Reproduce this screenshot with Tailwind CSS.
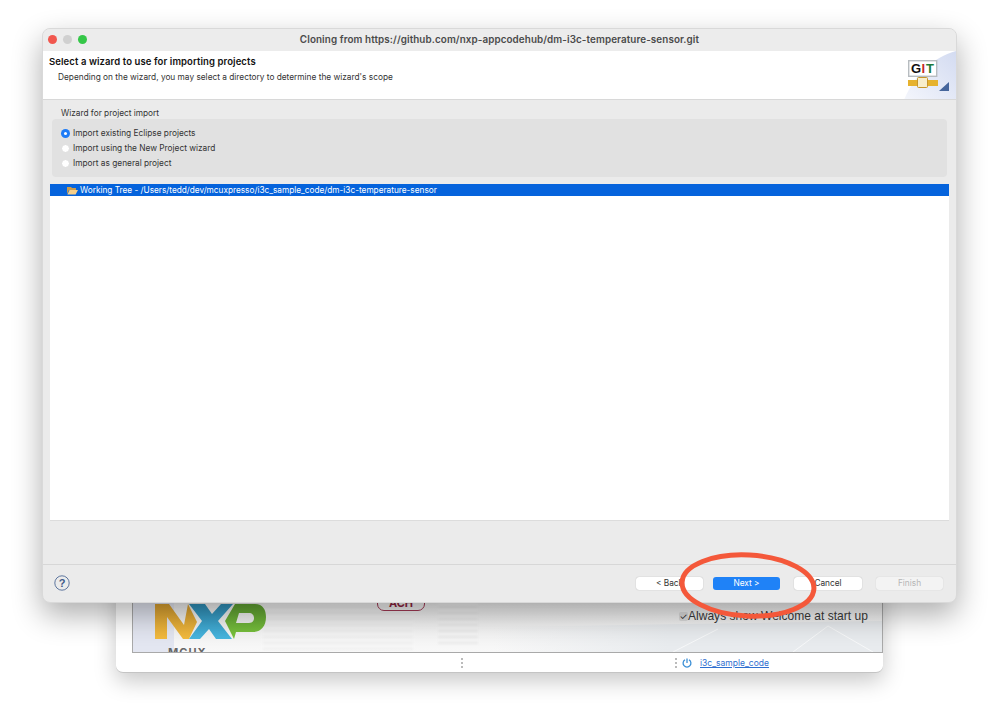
<!DOCTYPE html>
<html lang="en">
<head>
<meta charset="utf-8">
<script src="https://cdn.jsdelivr.net/npm/@tailwindcss/browser@4"></script>
<title>Cloning</title>
</head>
<body class="relative w-[999px] h-[704px] overflow-hidden bg-white font-['Inter','Liberation_Sans',sans-serif] text-[#2b2b2b]">

    <!-- welcome window behind the dialog -->
    <div class="absolute left-[116px] top-[560px] w-[767px] h-[113px] bg-white rounded-b-[7px] border-b border-[#c4c4c4] shadow-[0_8px_22px_rgba(0,0,0,0.22)] flex flex-col">
        <div class="relative ml-[16px] h-[93px] shrink-0 border-x border-b border-[#a9a9a9] bg-gradient-to-b from-[#cfcfcf] via-[#f0f0f0] to-[#f8f8f8] overflow-hidden">
            <div class="absolute left-0 bottom-0 w-[41px] h-[52px] bg-[#e3e6f1]"></div>
            <div class="absolute left-[130px] bottom-[2px] w-[150px] h-[50px] bg-[repeating-linear-gradient(180deg,#ebebeb_0px,#ebebeb_2px,#f7f7f7_2px,#f7f7f7_6px)] opacity-60 blur-[1px]"></div>
            <div class="absolute left-[305px] bottom-[8px] w-[40px] h-[44px] bg-[repeating-linear-gradient(180deg,#e2e2e2_0px,#e2e2e2_2px,#f7f7f7_2px,#f7f7f7_6px)] opacity-60 blur-[1px]"></div>
            <svg class="absolute left-[360px] top-[61px]" width="390" height="31" viewBox="0 0 390 31">
                <defs><linearGradient id="bd" x1="0" y1="0" x2="1" y2="0"><stop offset="0" stop-color="#e8ebee" stop-opacity="0"/><stop offset="0.45" stop-color="#e8ebee"/></linearGradient></defs>
                <path d="M0 6L390 0V31H0Z" fill="url(#bd)"/>
                <path d="M300 31L335 5L380 31M180 31L225 8" stroke="#f7f8f9" fill="none"/>
            </svg>
            <svg class="absolute left-[22px] top-[42px]" width="112" height="40" viewBox="0 0 112 40">
                <defs>
                    <linearGradient id="nY" x1="0" y1="0" x2="0" y2="1"><stop offset="0" stop-color="#d9a030"/><stop offset="1" stop-color="#f3bb3f"/></linearGradient>
                    <linearGradient id="nB" x1="0" y1="0" x2="0" y2="1"><stop offset="0" stop-color="#2f8fb8"/><stop offset="1" stop-color="#48b7e0"/></linearGradient>
                    <linearGradient id="nG" x1="0" y1="0" x2="0" y2="1"><stop offset="0" stop-color="#5fa032"/><stop offset="1" stop-color="#7cc63e"/></linearGradient>
                </defs>
                <path fill="url(#nY)" d="M0 2H14L29 23L33 2L42 20L34 37H28L12 15V37H0Z"/>
                <path fill="url(#nB)" d="M34 2H50L57 12L66 2H78L63 19L77 37H61L54 27L45 37H34L47 19Z"/>
                <path fill="url(#nG)" d="M80 2H100C108 2 111 8 111 15C111 24 106 30 98 30H81L79 37L70 19ZM84 11L81 21H94C98 21 99 18 99 16C99 13 97 11 94 11Z"/>
            </svg>
            <span class="absolute left-[35px] top-[87px] text-[11px] font-bold text-[#666] tracking-[1px] leading-none">MCUX</span>
            <div class="absolute left-[244px] top-[30px] w-[48px] h-[21px] rounded-[7px] border border-[#a33a55] text-[#8d2440] text-[11px] font-bold flex items-end justify-center leading-[13px]">ACH</div>
            <div class="absolute left-[546px] top-[47px] flex items-center">
                <span class="w-[9px] h-[9px] rounded-[2px] bg-[#dcdcdc] text-[9px] leading-[9px] text-[#222] flex items-center justify-center">✓</span>
                <span class="text-[12.05px] text-[#3a3a3a] font-['Liberation_Sans',sans-serif]">Always show Welcome at start up</span>
            </div>
        </div>
        <div class="flex-1 relative">
            <div class="absolute left-[345px] top-[5px] w-[1px] h-[10px] border-l-2 border-dotted border-[#bbb]"></div>
            <div class="absolute left-[559px] top-[5px] w-[1px] h-[10px] border-l-2 border-dotted border-[#bbb]"></div>
            <svg class="absolute left-[566px] top-[5px]" width="10" height="10" viewBox="0 0 10 10" fill="none" stroke="#3b8fd6" stroke-width="1.3"><path d="M3 1.8A3.9 3.9 0 1 0 7 1.8"/><path d="M5 .5V5"/></svg>
            <span class="absolute left-[584px] top-[5px] text-[8.5px] leading-[11px] text-[#2f6fd0] underline">i3c_sample_code</span>
        </div>
    </div>

    <!-- wizard dialog -->
    <div class="absolute left-[42px] top-[28px] w-[915px] h-[575px] rounded-[8px] bg-[#ebebeb] border border-[#d9d9d9] shadow-[0_12px_30px_rgba(0,0,0,0.32)] flex flex-col overflow-hidden">
        <div class="relative h-[22px] shrink-0 flex items-center justify-center bg-[#ececec] pb-[2px]">
            <div class="absolute left-[5px] top-[6px] flex gap-[6px]">
                <span class="w-[9px] h-[9px] rounded-full bg-[#f1574e]"></span>
                <span class="w-[9px] h-[9px] rounded-full bg-[#d0d0d0]"></span>
                <span class="w-[9px] h-[9px] rounded-full bg-[#35c748]"></span>
            </div>
            <span class="text-[9.85px] font-semibold text-[#4a4a4a] tracking-[0.1px]">Cloning from https://github.com/nxp-appcodehub/dm-i3c-temperature-sensor.git</span>
        </div>

        <div class="relative h-[49px] shrink-0 bg-white border-b border-[#d8d8d8] pl-[6px] pt-[5px] overflow-hidden">
            <div class="text-[9.5px] leading-[11px] font-semibold text-[#111] tracking-[0.1px]">Select a wizard to use for importing projects</div>
            <div class="text-[8.3px] leading-[11px] mt-[5px] pl-[9px] text-[#333]">Depending on the wizard, you may select a directory to determine the wizard's scope</div>
            <svg class="absolute right-0 top-0" width="60" height="49" viewBox="0 0 60 49">
                <defs><linearGradient id="hd" x1="0" y1="1" x2="1" y2="0"><stop offset="0" stop-color="#f4f6fc"/><stop offset="1" stop-color="#d3dbf1"/></linearGradient></defs>
                <path d="M60 0C38 6 18 24 8 49H60Z" fill="url(#hd)"/>
            </svg>
            <svg class="absolute left-[860px] top-[8px]" width="48" height="36" viewBox="0 0 48 36">
                <path d="M36 32H46V23Z" fill="#46669c"/>
                <rect x="5.7" y="1.7" width="28" height="15.6" fill="#fff" stroke="#b7bcc0" stroke-width="1.4"/>
                <rect x="5" y="21" width="30" height="6" fill="#e6b22e"/>
                <rect x="14.5" y="18.5" width="10" height="10" rx="1" fill="#f8eecb" stroke="#c7962a"/>
                <text x="8" y="14" font-family="Liberation Sans, sans-serif" font-weight="700" font-size="13" fill="#111">G</text>
                <text x="18.5" y="14" font-family="Liberation Sans, sans-serif" font-weight="700" font-size="13" fill="#c62828">I</text>
                <text x="23" y="14" font-family="Liberation Sans, sans-serif" font-weight="700" font-size="13" fill="#1c7a3a">T</text>
            </svg>
        </div>

        <div class="flex-1 flex flex-col px-[7px] min-h-0">
            <div class="pl-[11px] pt-[8px] text-[8.3px] leading-[11px] text-[#333]">Wizard for project import</div>
            <div class="ml-[2px] w-[895px] h-[58px] rounded-[4px] bg-[#e1e1e1] px-[9px] pt-[9px] flex flex-col gap-[4px] text-[8.3px] text-[#333]">
                <label class="h-[11px] flex items-center gap-[3px] leading-[11px]"><span class="w-[9px] h-[9px] rounded-full bg-[#1f7cf6] flex items-center justify-center"><span class="w-[3px] h-[3px] rounded-full bg-white"></span></span>Import existing Eclipse projects</label>
                <label class="h-[11px] flex items-center gap-[3px] leading-[11px]"><span class="w-[9px] h-[9px] rounded-full bg-white border border-[#dddddd]"></span>Import using the New Project wizard</label>
                <label class="h-[11px] flex items-center gap-[3px] leading-[11px]"><span class="w-[9px] h-[9px] rounded-full bg-white border border-[#dddddd]"></span>Import as general project</label>
            </div>
            <div class="mt-[7px] w-[899px] h-[337px] bg-white border-b border-[#dcdcdc]">
                <div class="h-[12px] bg-[#0563dc] flex items-center pl-[17px] gap-[2px] text-[8.25px] leading-[12px] text-white">
                    <svg width="11" height="9" viewBox="0 0 11 9"><path d="M0 1H4L5 2H9V4H2L0 8Z" fill="#c99a4a"/><path d="M2.5 4H11L8.6 8.5H0.4Z" fill="#f6cf8a"/></svg>
                    <span>Working Tree - /Users/tedd/dev/mcuxpresso/i3c_sample_code/dm-i3c-temperature-sensor</span>
                </div>
            </div>
        </div>

        <div class="h-[38px] shrink-0 border-t border-[#d7d7d7] relative flex items-center justify-end pr-[13px] pb-[1px] text-[8.3px]">
            <svg class="absolute left-[11px] top-[10px]" width="16" height="16" viewBox="0 0 16 16" fill="none"><circle cx="8" cy="8" r="7.2" stroke="#4f6a96" stroke-width="0.9"/><text x="8" y="12" text-anchor="middle" font-family="Liberation Sans, sans-serif" font-weight="700" font-size="11" fill="#3e5a88">?</text></svg>
            <button class="w-[67px] h-[13px] rounded-[3px] bg-white shadow-[0_0_1px_rgba(0,0,0,0.35)] leading-[13px] text-[#333]">&lt; Back</button>
            <button class="ml-[10px] w-[67px] h-[13px] rounded-[3px] bg-[#1f82f7] text-white leading-[13px]">Next &gt;</button>
            <button class="ml-[14px] w-[68px] h-[13px] rounded-[3px] bg-white shadow-[0_0_1px_rgba(0,0,0,0.35)] leading-[13px] text-[#333]">Cancel</button>
            <button class="ml-[14px] w-[67px] h-[13px] rounded-[3px] bg-[#f3f3f3] shadow-[0_0_1px_rgba(0,0,0,0.2)] leading-[13px] text-[#b5b5b5]">Finish</button>
        </div>
    </div>

    <!-- red annotation ring -->
    <svg class="absolute left-[675px] top-[545px]" width="150" height="80" viewBox="0 0 150 80" fill="none">
        <ellipse cx="73" cy="40.5" rx="66" ry="30.5" transform="rotate(3 73 40.5)" stroke="#f4583a" stroke-width="5"/>
    </svg>
</body>
</html>
